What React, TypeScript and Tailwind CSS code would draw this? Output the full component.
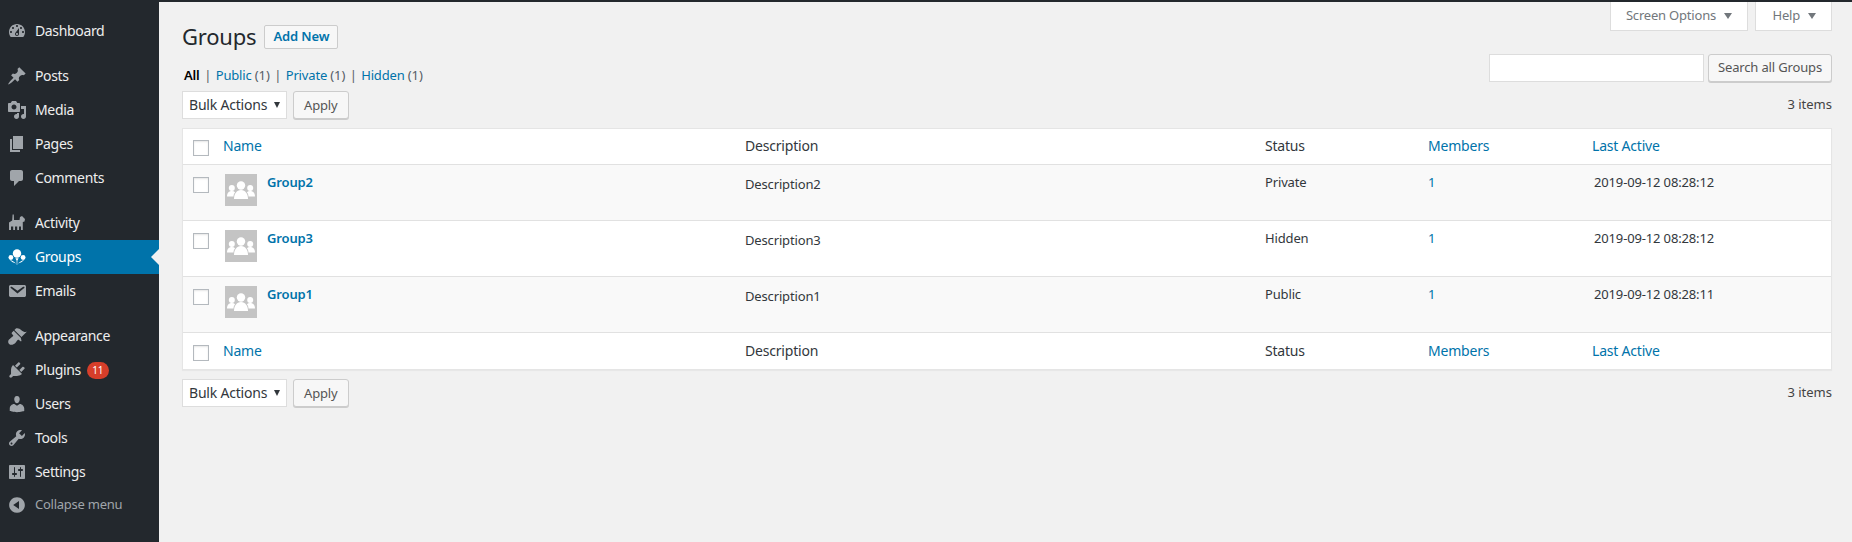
import { ReactNode } from "react";

const icons: Record<string, ReactNode> = {
  dashboard: <path d="M3.76 16h12.48c1.1-1.37 1.76-3.11 1.76-5 0-4.42-3.58-8-8-8s-8 3.58-8 8c0 1.89.66 3.63 1.76 5zM10 4c.55 0 1 .45 1 1s-.45 1-1 1-1-.45-1-1 .45-1 1-1zM6 6c.55 0 1 .45 1 1s-.45 1-1 1-1-.45-1-1 .45-1 1-1zm8 0c.55 0 1 .45 1 1s-.45 1-1 1-1-.45-1-1 .45-1 1-1zm-5.37 5.55L12 7v6c0 1.1-.9 2-2 2s-2-.9-2-2c0-.57.24-1.08.63-1.45zM4 10c.55 0 1 .45 1 1s-.45 1-1 1-1-.45-1-1 .45-1 1-1zm12 0c.55 0 1 .45 1 1s-.45 1-1 1-1-.45-1-1 .45-1 1-1zm-5 3c0-.55-.45-1-1-1s-1 .45-1 1 .45 1 1 1 1-.45 1-1z" fillRule="evenodd" />,
  posts: <path d="M10.44 3.02l1.82-1.82 6.36 6.35-1.83 1.82c-1.05-.68-2.48-.57-3.41.36l-.75.75c-.92.93-1.04 2.35-.35 3.41l-1.83 1.82-2.41-2.41-2.8 2.79c-.42.42-3.38 2.71-3.8 2.29s1.86-3.39 2.28-3.81l2.79-2.79L4.1 9.36l1.83-1.82c1.05.69 2.48.57 3.4-.36l.75-.75c.93-.92 1.05-2.35.36-3.41z" />,
  media: <path d="M13 11V4c0-.55-.45-1-1-1h-1.67L9 1H5L3.67 3H2c-.55 0-1 .45-1 1v7c0 .55.45 1 1 1h10c.55 0 1-.45 1-1zM7 4.5c1.38 0 2.5 1.12 2.5 2.5S8.38 9.5 7 9.5 4.5 8.38 4.5 7 5.62 4.5 7 4.5zM14 6h5v10.5c0 1.38-1.12 2.5-2.5 2.5S14 17.88 14 16.5s1.12-2.5 2.5-2.5c.17 0 .34.02.5.05V9h-3V6zm-4 8.05V13h2v3.5c0 1.38-1.12 2.5-2.5 2.5S7 17.88 7 16.5 8.12 14 9.5 14c.17 0 .34.02.5.05z" fillRule="evenodd" />,
  pages: <path d="M6 15V2h10v13H6zm-1 1h8v2H3V5h2v11z" />,
  comments: <path d="M5 2h9c1.1 0 2 .9 2 2v7c0 1.1-.9 2-2 2h-2l-5 5v-5H5c-1.1 0-2-.9-2-2V4c0-1.1.9-2 2-2z" />,
  activity: <path d="M2 17V9.5L5.2 7.5 5.6 1.5H6.8L7 7H12.5L13 4 15 3 18 6 17.5 8.5 15.8 9V17H14V13.5H12V17H10.2V13.5H8V17H6.2V13.5H4V17z" />,
  groups: (
    <>
      <circle cx="10" cy="6.5" r="4.2" />
      <path d="M8.4 11.2H11.6L10.4 13.5 10.2 18H9.8L9.6 13.5z" />
      <circle cx="3.9" cy="10.5" r="2.4" />
      <path d="M2.6 12.6C4.5 13.5 6.5 14.5 9 16.5 6 15.8 4 14.5 2.6 12.6z" />
      <circle cx="16.1" cy="10.5" r="2.4" />
      <path d="M17.4 12.6C15.5 13.5 13.5 14.5 11 16.5 14 15.8 16 14.5 17.4 12.6z" />
    </>
  ),
  emails: <path d="M3.87 4h13.25C18.37 4 19 4.59 19 5.79v8.42c0 1.19-.63 1.79-1.88 1.79H3.87c-1.25 0-1.88-.6-1.88-1.79V5.79c0-1.2.63-1.79 1.88-1.79zm6.62 8.6l6.74-5.53c.24-.2.43-.66.13-1.07-.29-.41-.82-.42-1.17-.17l-5.7 3.86L4.8 5.83c-.35-.25-.88-.24-1.17.17-.3.41-.11.87.13 1.07z" fillRule="evenodd" />,
  appearance: <path d="M14.48 11.06L7.41 3.99l1.5-1.5c.5-.56 2.3-.47 3.51.32 1.21.8 1.43 1.28 2.91 2.1 1.18.64 2.45 1.26 4.45.85zm-.71.71L6.7 4.7 4.93 6.47c-.39.39-.39 1.02 0 1.41l1.06 1.06c.39.39.39 1.03 0 1.42-.6.6-1.43 1.11-2.21 1.69-.35.26-.7.53-1.01.84C1.43 13.23.4 16.08 2.1 17.9c1.7 1.7 4.67.65 6.01-.69.31-.31.58-.66.84-1.01.58-.78 1.09-1.61 1.69-2.21.39-.39 1.03-.39 1.42 0l1.06 1.06c.39.39 1.02.39 1.41 0z" />,
  plugins: <path d="M13.11 4.36L9.87 7.6 8 5.73l3.24-3.24c.35-.34 1.05-.2 1.56.32.52.51.66 1.21.31 1.55zm-8 1.77l.91-1.12 9.01 9.01-1.19.84c-.71.71-2.63 1.16-3.82 1.16H6.14L4.9 17.26c-.59.59-1.54.59-2.12 0-.59-.58-.59-1.53 0-2.12l1.24-1.24v-3.88c0-1.13.4-3.19 1.09-3.89zm7.26 3.97l3.24-3.24c.34-.35 1.04-.21 1.55.31.52.51.66 1.21.31 1.55l-3.24 3.25z" />,
  users: <path d="M10 9.25c-2.27 0-2.73-3.44-2.73-3.44C7 4.02 7.82 2 9.97 2c2.16 0 2.98 2.02 2.71 3.81 0 0-.41 3.44-2.68 3.44zm0 2.57L12.72 10c2.39 0 4.52 2.33 4.52 4.53v2.49s-3.65 1.13-7.24 1.13c-3.65 0-7.24-1.13-7.24-1.13v-2.49c0-2.25 1.94-4.48 4.47-4.48z" />,
  tools: <path d="M16.68 9.77c-1.34 1.34-3.3 1.67-4.95.99l-5.41 6.52c-.99.99-2.59.99-3.58 0s-.99-2.59 0-3.57l6.52-5.42c-.68-1.65-.35-3.61.99-4.95 1.28-1.28 3.12-1.62 4.72-1.06l-2.89 2.89 2.82 2.82 2.86-2.87c.53 1.58.18 3.39-1.08 4.65zM3.81 16.21c.4.39 1.04.39 1.43 0 .4-.4.4-1.04 0-1.43-.39-.4-1.03-.4-1.43 0-.39.39-.39 1.03 0 1.43z" fillRule="evenodd" />,
  settings: <path d="M18 16V4c0-.55-.45-1-1-1H3c-.55 0-1 .45-1 1v12c0 .55.45 1 1 1h14c.55 0 1-.45 1-1zM8 11h1c.55 0 1 .45 1 1s-.45 1-1 1H8v1.5c0 .28-.22.5-.5.5s-.5-.22-.5-.5V13H6c-.55 0-1-.45-1-1s.45-1 1-1h1V5.5c0-.28.22-.5.5-.5s.5.22.5.5V11zm5-2h-1c-.55 0-1-.45-1-1s.45-1 1-1h1V5.5c0-.28.22-.5.5-.5s.5.22.5.5V7h1c.55 0 1 .45 1 1s-.45 1-1 1h-1v5.5c0 .28-.22.5-.5.5s-.5-.22-.5-.5V9z" fillRule="evenodd" />,
  collapse: <path d="M10 2.16c4.33 0 7.84 3.51 7.84 7.84s-3.51 7.84-7.84 7.84S2.16 14.33 2.16 10 5.71 2.16 10 2.16zm2 11.72V6.12L6.18 9.97z" fillRule="evenodd" />,
};

function MenuIcon({ name, active }: { name: string; active?: boolean }) {
  return (
    <svg viewBox="0 0 20 20" className={`h-5 w-5 shrink-0 ${active ? "fill-white" : "fill-[#a0a5aa]"}`}>
      {icons[name]}
    </svg>
  );
}

function MenuItem({ name, label, active, badge }: { name: string; label: string; active?: boolean; badge?: string }) {
  return (
    <div className={`relative flex h-[34px] items-center pl-[7px] ${active ? "bg-[#0073aa] text-white" : "text-[#eeeeee]"}`}>
      <MenuIcon name={name} active={active} />
      <span className="ml-[8px] text-sm tracking-[-0.35px]">{label}</span>
      {badge && (
        <span className="ml-[6px] flex h-[17px] w-[22px] items-center justify-center rounded-full bg-[#d63e2a] text-[10px] text-white">
          {badge}
        </span>
      )}
      {active && (
        <span className="absolute right-0 top-[9px] h-0 w-0 border-y-[8px] border-r-[8px] border-y-transparent border-r-[#f1f1f1]" />
      )}
    </div>
  );
}

function Sidebar() {
  return (
    <aside className="w-[159px] shrink-0 bg-[#23282d] pt-[12px]">
      <MenuItem name="dashboard" label="Dashboard" />
      <div className="h-[11px]" />
      <MenuItem name="posts" label="Posts" />
      <MenuItem name="media" label="Media" />
      <MenuItem name="pages" label="Pages" />
      <MenuItem name="comments" label="Comments" />
      <div className="h-[11px]" />
      <MenuItem name="activity" label="Activity" />
      <MenuItem name="groups" label="Groups" active />
      <MenuItem name="emails" label="Emails" />
      <div className="h-[11px]" />
      <MenuItem name="appearance" label="Appearance" />
      <MenuItem name="plugins" label="Plugins" badge="11" />
      <MenuItem name="users" label="Users" />
      <MenuItem name="tools" label="Tools" />
      <MenuItem name="settings" label="Settings" />
      <div className="flex h-[32px] items-center pl-[7px] text-[#a0a5aa]">
        <MenuIcon name="collapse" />
        <span className="ml-[8px] text-[13px] tracking-[-0.25px]">Collapse menu</span>
      </div>
    </aside>
  );
}

function Checkbox() {
  return <span className="block h-4 w-4 border border-[#b4b9be] bg-white shadow-[inset_0_1px_2px_rgba(0,0,0,0.1)]" />;
}

function GroupAvatar() {
  return (
    <div className="ml-[2px] h-8 w-8 bg-[#c4c4c4]">
      <svg viewBox="0 0 32 32" className="h-8 w-8 fill-white">
        <circle cx="6.8" cy="14" r="3" />
        <path d="M2 22.5c0-3.3 1.8-5.5 4.8-5.5 1.4 0 2.5.4 3.3 1.2C9 19.5 8.5 21 8.5 22.5z" />
        <circle cx="25.2" cy="14" r="3" />
        <path d="M30 22.5c0-3.3-1.8-5.5-4.8-5.5-1.4 0-2.5.4-3.3 1.2 1.1 1.3 1.6 2.8 1.6 4.3z" />
        <circle cx="16" cy="11.5" r="4.2" />
        <path d="M9 25c0-5 2.5-9 7-9s7 4 7 9z" />
      </svg>
    </div>
  );
}

function HeadRow({ top }: { top?: boolean }) {
  return (
    <div className={`flex h-[36px] items-center bg-white text-sm tracking-[-0.2px] ${top ? "border-b border-[#e1e1e1] pb-[2px]" : ""}`}>
      <div className="w-[40px] pl-[10px] pt-[4px]"><Checkbox /></div>
      <div className="w-[522px] text-[#0073aa]">Name</div>
      <div className="w-[520px] text-[#32373c]">Description</div>
      <div className="w-[163px] text-[#32373c]">Status</div>
      <div className="w-[164px] text-[#0073aa]">Members</div>
      <div className="text-[#0073aa]">Last Active</div>
    </div>
  );
}

function GroupRow({ name, desc, status, date, striped }: { name: string; desc: string; status: string; date: string; striped?: boolean }) {
  return (
    <div className={`flex h-[56px] border-b border-[#e1e1e1] pt-[9px] text-[13px] tracking-[-0.15px] text-[#32373c] ${striped ? "bg-[#f9f9f9]" : "bg-white"}`}>
      <div className="w-[40px] pl-[10px] pt-[3px]"><Checkbox /></div>
      <div className="flex w-[522px]">
        <GroupAvatar />
        <a className="ml-[10px] font-semibold leading-[16px] text-[#0073aa]">{name}</a>
      </div>
      <div className="w-[520px] leading-[20px]">{desc}</div>
      <div className="w-[163px] leading-[16px]">{status}</div>
      <div className="w-[164px] leading-[16px] text-[#0073aa]">1</div>
      <div className="pl-[2px] leading-[16px]">{date}</div>
    </div>
  );
}

function Button({ children, className }: { children: ReactNode; className?: string }) {
  return (
    <button className={`h-[28px] rounded-[3px] border border-[#cccccc] bg-[#f7f7f7] text-[13px] tracking-[-0.15px] text-[#555555] shadow-[0_1px_0_#cccccc] ${className ?? "px-[10px] pt-[1px]"}`}>
      {children}
    </button>
  );
}

function BulkBar() {
  return (
    <div className="flex items-center justify-between">
      <div className="flex items-center gap-[6px]">
        <div className="flex h-[28px] w-[105px] items-center justify-between border border-[#dddddd] bg-white pl-[6px] pr-[6px] text-sm tracking-[-0.2px] text-[#32373c]">
          Bulk Actions
          <span className="h-0 w-0 border-x-[3px] border-t-[6px] border-x-transparent border-t-[#32373c]" />
        </div>
        <Button>Apply</Button>
      </div>
      <span className="text-[13px] text-[#444444]">3 items</span>
    </div>
  );
}

function TabButton({ label, width }: { label: string; width: string }) {
  return (
    <div className={`flex h-[29px] items-center justify-end gap-[8px] border border-t-0 border-[#dddddd] bg-white pr-[15px] text-[13px] tracking-[-0.2px] text-[#72777c] ${width}`}>
      {label}
      <span className="h-0 w-0 border-x-[4px] border-t-[6px] border-x-transparent border-t-[#72777c]" />
    </div>
  );
}

export default function App() {
  return (
    <div className="flex h-[542px] flex-col bg-[#f1f1f1] font-['Noto_Sans',sans-serif]">
      <div className="h-[2px] shrink-0 bg-[#23282d]" />
      <div className="flex min-h-0 flex-1">
        <Sidebar />
        <main className="min-w-0 flex-1 pl-[23px] pr-[20px]">
          <div className="flex justify-between">
            <div className="flex items-center pt-[20px]">
              <h1 className="text-[22px] leading-[29px] tracking-[-0.2px] text-[#23282d]">Groups</h1>
              <span className="ml-[8px] flex h-[24px] w-[74px] items-center justify-center rounded-[2px] border border-[#cccccc] bg-[#f7f7f7] text-[13px] font-semibold tracking-[-0.15px] text-[#0073aa]">
                Add New
              </span>
            </div>
            <div className="flex gap-[7px]">
              <TabButton label="Screen Options" width="w-[138px]" />
              <TabButton label="Help" width="w-[77px]" />
            </div>
          </div>

          <div className="mt-[3px] flex h-[28px] items-start justify-between">
            <div className="pl-[2px] pt-[11px] text-[13px] leading-[20px] tracking-[-0.15px] text-[#555d66]">
              <b className="font-semibold text-black">All</b>
              <span className="mx-[4.5px]">|</span>
              <a className="text-[#0073aa]">Public</a> (1)
              <span className="mx-[4.5px]">|</span>
              <a className="text-[#0073aa]">Private</a> (1)
              <span className="mx-[4.5px]">|</span>
              <a className="text-[#0073aa]">Hidden</a> (1)
            </div>
            <div className="flex gap-[4px]">
              <div className="h-[28px] w-[215px] border border-[#dddddd] bg-white" />
              <Button className="w-[124px]">Search all Groups</Button>
            </div>
          </div>

          <div className="mt-[9px]"><BulkBar /></div>

          <div className="mt-[9px] border border-[#e5e5e5] shadow-[0_1px_1px_rgba(0,0,0,0.04)]">
            <HeadRow top />
            <GroupRow name="Group2" desc="Description2" status="Private" date="2019-09-12 08:28:12" striped />
            <GroupRow name="Group3" desc="Description3" status="Hidden" date="2019-09-12 08:28:12" />
            <GroupRow name="Group1" desc="Description1" status="Public" date="2019-09-12 08:28:11" striped />
            <HeadRow />
          </div>

          <div className="mt-[9px]"><BulkBar /></div>
        </main>
      </div>
    </div>
  );
}
